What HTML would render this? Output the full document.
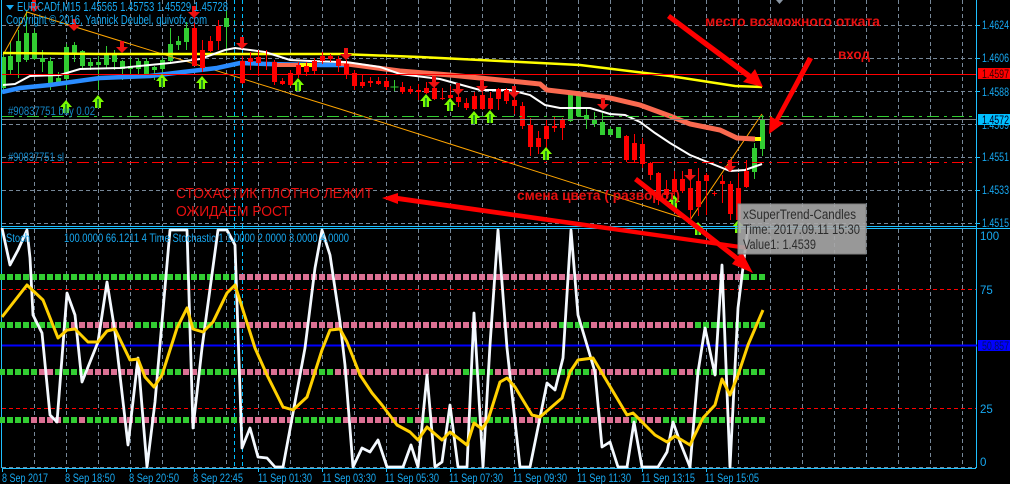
<!DOCTYPE html>
<html><head><meta charset="utf-8"><style>
html,body{margin:0;padding:0;background:#000;width:1010px;height:484px;overflow:hidden}
svg{display:block;font-family:"Liberation Sans",sans-serif}
text{font-size:11.500px;fill:#17a8f0}
.r text{fill:#e81010;font-size:15px}
.r text.b{font-size:14px;font-weight:bold}
.tt text{fill:#2c2c2c;font-size:13.500px}
</style></head><body>
<svg width="1010" height="484" viewBox="0 0 1010 484" xmlns="http://www.w3.org/2000/svg">
<defs>
<path id="d" d="M-2-12h4v6h4l-6 6-6-6h4z" fill="#ee1111"/>
<g id="u"><path d="M0 0l6 7h-3v6h-6v-6h-3z" fill="#7cfc00"/><path d="M-1 4h2v9h-2z" fill="#228b22"/></g>
</defs>
<rect width="1010" height="484" fill="#000"/>
<!-- grid -->
<g stroke="#778899" stroke-dasharray="4 3" fill="none" shape-rendering="crispEdges">
<path d="M2 25.500H976M2 58.500H976M2 91.500H976M2 124.500H976M2 157.500H976M2 190.500H976M2 223.500H976M2 467.500H976"/>
<path d="M34.500 0V226M66.500 0V226M98.500 0V226M130.500 0V226M162.500 0V226M194.500 0V226M226.500 0V226M258.500 0V226M290.500 0V226M322.500 0V226M354.500 0V226M386.500 0V226M418.500 0V226M450.500 0V226M482.500 0V226M514.500 0V226M546.500 0V226M578.500 0V226M610.500 0V226M642.500 0V226M674.500 0V226M706.500 0V226M738.500 0V226M770.500 0V226M802.500 0V226M834.500 0V226M866.500 0V226M898.500 0V226M930.500 0V226M962.500 0V226"/>
<path d="M34.500 229V468M66.500 229V468M98.500 229V468M130.500 229V468M162.500 229V468M194.500 229V468M226.500 229V468M258.500 229V468M290.500 229V468M322.500 229V468M354.500 229V468M386.500 229V468M418.500 229V468M450.500 229V468M482.500 229V468M514.500 229V468M546.500 229V468M578.500 229V468M610.500 229V468M642.500 229V468M674.500 229V468M706.500 229V468M738.500 229V468M770.500 229V468M802.500 229V468M834.500 229V468M866.500 229V468M898.500 229V468M930.500 229V468M962.500 229V468"/>
</g>
<path d="M234.500 0V468M242.500 0V468" stroke="#00bfff" stroke-dasharray="4 3" shape-rendering="crispEdges"/>
<!-- green candles -->
<g transform="translate(.5 0)" stroke="#32cd32" fill="none" shape-rendering="crispEdges">
<path d="M3 55V91M10 42V75M18 30V78M26 10V62M34 30V60M42 50V72M50 57V90M58 72V86M66 44V90M74 42V62M82 50V69M90 58V70M98 56V90M106 46V68M114 50V70M122 60V80M130 58V74M138 58V74M146 58V78M154 66V80M162 58V80M170 28V64M178 36V50M186 22V50M226 10V52M234 20V21M394 80V91M390 87H398M570 93V122M578 92V117M586 109V129M594 112V127M602 113V135M610 127V135M618 127V138M754 143V179M762 115V156"/>
<path stroke-width="5" d="M3 57V88M10 56V70M18 41V62M26 33V60M34 33V59M42 58V62M50 61V85M58 78V85M66 47V79M74 45V53M82 51V66M90 62V66M98 62V65M106 54V65M114 54V62M122 61V69M130 66V69M138 61V69M146 61V74M154 67V70M162 60V69M170 44V61M178 41V45M186 28V42M226 18V27M570 93V121M578 93V116M586 115V119M594 120V124M602 122V135M610 129V135M618 127V138M754 148V172M762 120V149"/>
</g>
<!-- thin orange -->
<polyline points="3,55 27,12 340,109 680,217 690,220 762,114" fill="none" stroke="#ffa500" stroke-width="1"/>
<!-- MAs -->
<polyline points="3,53 100,54 340,54 420,57 500,61 580,65 670,76 735,86 762,87" fill="none" stroke="#ffff00" stroke-width="2.500"/>
<polyline points="2,92 20,88 50,85 100,78 150,76 183,72 217,68 240,63 267,64 320,65 345,65" fill="none" stroke="#2a8cff" stroke-width="4.500"/>
<polyline points="300,65 316,65" fill="none" stroke="#ffff00" stroke-width="4"/>
<polyline points="277,65 298,65" fill="none" stroke="#fa6a50" stroke-width="4"/>
<polyline points="340,63 400,71 450,75 500,80 540,84 547,90 573,93 610,98 640,105 670,116 690,124 720,130 737,138 755,139" fill="none" stroke="#fa6a50" stroke-width="5"/>
<path d="M755 139H761" stroke="#ffff00" stroke-width="4"/>
<polyline points="3,85 15,84 30,76 60,75 80,69 120,68 170,63 200,59 225,50 235,48 250,50 265,52 290,60 310,61 340,62 346,62 380,67 400,74 440,79 480,90 510,90 530,95 545,105 560,108 590,108 610,114 625,115 640,122 655,133 670,143 690,155 715,165 730,171 745,170 762,164" fill="none" stroke="#fff" stroke-width="2"/>
<!-- red candles -->
<g transform="translate(.5 0)" stroke="#ff0000" fill="none" shape-rendering="crispEdges">
<path d="M194 14V66M202 40V72M210 36V52M218 20V50M242 56V84M250 52V70M258 50V76M266 50V70M274 60V85M282 78V85M290 70V86M298 62V78M306 62V76M314 58V74M322 52V64M330 54V62M338 56V72M346 60V79M354 70V90M362 75V88M370 77V87M378 77V85M386 78V90M402 82V94M410 86V94M418 84V100M426 82V94M434 80V100M442 88V100M450 86V102M458 90V107M466 98V110M474 92V110M482 92V110M490 92V110M498 88V110M506 88V104M514 90V114M522 102V129M530 118V156M538 131V154M546 120V153M554 116V132M562 118V140M626 135V162M634 134V162M642 138V168M650 162V180M658 172V205M666 180V198M674 171V205M682 171V193M690 174V219M698 168V216M706 173V215M714 191V196M722 175V203M730 181V220M738 173V225M746 160V188"/>
<path stroke-width="5" d="M194 28V66M202 50V68M210 41V51M218 26V41M242 61V83M250 58V62M258 57V63M274 62V82M282 81V84M290 73V85M298 65V74M306 66V72M314 61V71M322 56V61M330 56V59M338 59V66M346 64V74M354 73V86M362 82V86M370 81V83M378 81V84M386 81V87M402 87V92M410 89V92M418 90V92M426 88V93M434 88V99M442 98V99M450 95V98M458 97V102M466 103V108M474 96V109M482 95V109M490 98V109M498 89V99M506 90V101M514 100V106M522 106V126M530 125V147M538 138V147M546 126V139M554 126V128M562 120V128M626 136V160M634 143V160M642 144V164M650 163V175M658 173V200M666 189V195M674 179V192M682 179V191M690 188V210M698 181V207M706 175V181M714 193V194M722 181V184M730 184V214M738 188V220M746 171V187"/>
</g>
<!-- hlines -->
<g shape-rendering="crispEdges" fill="none">
<path d="M2 74.500H977" stroke="#ff0000"/>
<path d="M2 116.500H977" stroke="#32cd32" stroke-dasharray="12 5 3 5"/>
<path d="M2 119.500H977" stroke="#808080"/>
<path d="M2 162.500H977" stroke="#ff0000" stroke-dasharray="12 5 3 5"/>
</g>
<!-- red down arrows -->
<g>
<use href="#d" x="34" y="12"/><use href="#d" x="74" y="31"/><use href="#d" x="122" y="53"/><use href="#d" x="194" y="18"/><use href="#d" x="242" y="49"/><use href="#d" x="346" y="60"/><use href="#d" x="434" y="88"/><use href="#d" x="458" y="95"/><use href="#d" x="482" y="92"/><use href="#d" x="514" y="98"/><use href="#d" x="603" y="110"/><use href="#d" x="690" y="181"/><use href="#d" x="730" y="172"/>
</g>
<!-- up arrows -->
<g>
<use href="#u" x="66" y="100"/><use href="#u" x="98" y="95"/><use href="#u" x="162" y="74"/><use href="#u" x="202" y="76"/><use href="#u" x="298" y="78"/><use href="#u" x="426" y="94"/><use href="#u" x="450" y="98"/><use href="#u" x="474" y="111"/><use href="#u" x="490" y="110"/><use href="#u" x="546" y="147"/><use href="#u" x="674" y="195"/><use href="#u" x="698" y="222"/><use href="#u" x="738" y="220"/>
</g>
<!-- pane borders -->
<g shape-rendering="crispEdges" fill="none" stroke="#1ec0ff">
<path d="M1.500 0V468M976.500 0V468M2 226.500H976M2 228.500H1010M2 468.500H976"/>
<path d="M2.500 468V472M66.500 468V472M130.500 468V472M194.500 468V472M258.500 468V472M322.500 468V472M386.500 468V472M450.500 468V472M514.500 468V472M578.500 468V472M642.500 468V472M706.500 468V472"/>
<path d="M976 25.500H980M976 58.500H980M976 91.500H980M976 157.500H980M976 190.500H980M976 223.500H980"/>
</g>
<path d="M776 0h7l-3.500 4z" fill="#8a96a3"/>
<!-- stochastic levels -->
<path d="M2 289.500H976M2 408.500H976" stroke="#ff0000" stroke-dasharray="4 3" shape-rendering="crispEdges"/>
<g fill="none" stroke-width="6" stroke-dasharray="6 2" shape-rendering="crispEdges">
<g stroke="#32cd32">
<path d="M-1 277H237"/><path d="M743 277H766"/>
<path d="M-1 325H71"/><path d="M135 325H238"/><path d="M559 325H590"/><path d="M695 325H766"/>
<path d="M-1 372H39"/><path d="M55 372H87"/><path d="M151 372H183"/><path d="M199 372H238"/><path d="M319 372H335"/><path d="M463 372H495"/><path d="M543 372H590"/><path d="M663 372H678"/><path d="M695 372H766"/>
<path d="M-1 420H30"/><path d="M63 420H78"/><path d="M87 420H118"/><path d="M135 420H142"/><path d="M159 420H190"/><path d="M199 420H238"/><path d="M295 420H342"/><path d="M407 420H414"/><path d="M423 420H430"/><path d="M447 420H454"/><path d="M471 420H478"/><path d="M487 420H510"/><path d="M543 420H590"/><path d="M631 420H638"/><path d="M663 420H686"/><path d="M695 420H726"/><path d="M735 420H766"/>
</g>
<g stroke="#db7093">
<path d="M239 277H742"/>
<path d="M71 325H134"/><path d="M239 325H558"/><path d="M591 325H694"/>
<path d="M39 372H54"/><path d="M87 372H150"/><path d="M183 372H198"/><path d="M239 372H318"/><path d="M335 372H462"/><path d="M495 372H542"/><path d="M591 372H662"/><path d="M679 372H694"/>
<path d="M31 420H62"/><path d="M79 420H86"/><path d="M119 420H134"/><path d="M143 420H158"/><path d="M191 420H198"/><path d="M239 420H294"/><path d="M343 420H406"/><path d="M415 420H422"/><path d="M431 420H446"/><path d="M455 420H470"/><path d="M479 420H486"/><path d="M511 420H542"/><path d="M591 420H630"/><path d="M639 420H662"/><path d="M687 420H694"/><path d="M727 420H734"/>
</g>
</g>
<path d="M2 345.500H977" stroke="#0000ff" stroke-width="2" shape-rendering="crispEdges"/>
<!-- stoch white -->
<polyline fill="none" stroke="#f4f9ff" stroke-width="2.800" stroke-linejoin="round" points="2,228 10,265 18,250 27,230 30,258 33,315 42,333 50,415 57,422 67,293 75,315 82,382 98,342 107,282 115,332 128,445 138,358 147,467 155,402 170,230 187,230 193,428 202,348 218,230 227,230 235,245 242,448 250,428 258,457 267,458 275,467 283,467 305,348 315,268 322,230 330,255 340,322 345,365 353,467 362,448 370,452 378,440 387,467 403,467 411,445 418,467 427,375 435,467 442,462 450,405 458,467 467,467 474,313 483,467 490,345 498,230 507,348 520,467 530,467 547,383 555,390 563,358 571,230 578,315 595,372 602,447 610,442 618,467 627,467 634,422 642,467 658,467 667,452 673,422 680,442 690,467 698,372 705,328 715,375 722,265 730,467 738,308 747,235 748,228"/>
<!-- stoch yellow -->
<polyline fill="none" stroke="#ffd000" stroke-width="3" stroke-linejoin="round" points="2,317 27,285 43,300 58,338 67,330 75,329 88,342 98,342 107,331 115,329 130,360 138,359 145,377 154,387 162,375 177,328 187,308 193,329 203,332 213,322 227,293 235,285 255,348 267,375 283,407 293,410 307,397 322,350 330,330 340,329 347,342 360,375 372,393 382,405 397,425 410,432 418,440 427,427 442,440 450,432 467,445 474,423 482,429 488,420 500,382 507,378 515,387 532,415 540,417 562,398 570,372 578,360 593,358 602,373 627,415 633,413 655,435 667,442 675,436 690,445 703,418 715,405 722,379 730,395 738,375 748,345 763,310"/>
<!-- chart texts -->
<path d="M6 5h8l-4 5z" fill="#17a8f0"/>
<text x="17" y="11" textLength="211" lengthAdjust="spacingAndGlyphs" style="font-size:12.500px">EURCADf,M15  1.45565 1.45753 1.45529 1.45728</text>
<text x="6" y="24" textLength="201" lengthAdjust="spacingAndGlyphs" style="font-size:12.500px">Copyright © 2016, Yannick Deubel, quivofx.com</text>
<text x="8" y="115" textLength="87" lengthAdjust="spacingAndGlyphs" style="fill:#1587c8;font-size:12px">#90837751 buy 0.02</text>
<text x="8" y="161" textLength="56" lengthAdjust="spacingAndGlyphs" style="fill:#1587c8;font-size:12px">#90837751 sl</text>
<text x="6" y="242" textLength="24" lengthAdjust="spacingAndGlyphs">Stoch</text>
<text x="64" y="242" textLength="285" lengthAdjust="spacingAndGlyphs" style="font-size:12px">100.0000 66.1211  4 Time Stochastic 1 1.0000 2.0000 3.0000 4.0000</text>
<!-- right axis -->
<g>
<text x="982" y="29" textLength="27" lengthAdjust="spacingAndGlyphs">1.4624</text>
<text x="982" y="62" textLength="27" lengthAdjust="spacingAndGlyphs">1.4606</text>
<text x="982" y="96" textLength="27" lengthAdjust="spacingAndGlyphs">1.4588</text>
<text x="982" y="129" textLength="27" lengthAdjust="spacingAndGlyphs">1.4569</text>
<text x="982" y="161" textLength="27" lengthAdjust="spacingAndGlyphs">1.4551</text>
<text x="982" y="194" textLength="27" lengthAdjust="spacingAndGlyphs">1.4533</text>
<text x="982" y="227" textLength="27" lengthAdjust="spacingAndGlyphs">1.4515</text>
<rect x="978" y="68" width="32" height="11" fill="#ff0000"/>
<text x="982" y="78" textLength="27" lengthAdjust="spacingAndGlyphs" style="fill:#300">1.4597</text>
<rect x="978" y="114" width="32" height="11" fill="#00bfff"/>
<text x="982" y="124" textLength="27" lengthAdjust="spacingAndGlyphs" style="fill:#002">1.4572</text>
<text x="980" y="240">100</text>
<text x="980" y="294">75</text>
<text x="980" y="413">25</text>
<text x="980" y="466">0</text>
<rect x="978" y="340" width="32" height="11" fill="#0000ff"/>
<text x="982" y="350" textLength="27" lengthAdjust="spacingAndGlyphs" style="fill:#001060">50.857</text>
</g>
<!-- dates -->
<g>
<text x="2" y="482" textLength="46" lengthAdjust="spacingAndGlyphs">8 Sep 2017</text>
<text x="65" y="482" textLength="50" lengthAdjust="spacingAndGlyphs">8 Sep 18:50</text>
<text x="129" y="482" textLength="50" lengthAdjust="spacingAndGlyphs">8 Sep 20:50</text>
<text x="193" y="482" textLength="50" lengthAdjust="spacingAndGlyphs">8 Sep 22:45</text>
<text x="258" y="482" textLength="54" lengthAdjust="spacingAndGlyphs">11 Sep 01:30</text>
<text x="322" y="482" textLength="54" lengthAdjust="spacingAndGlyphs">11 Sep 03:30</text>
<text x="385" y="482" textLength="54" lengthAdjust="spacingAndGlyphs">11 Sep 05:30</text>
<text x="449" y="482" textLength="54" lengthAdjust="spacingAndGlyphs">11 Sep 07:30</text>
<text x="513" y="482" textLength="54" lengthAdjust="spacingAndGlyphs">11 Sep 09:30</text>
<text x="577" y="482" textLength="54" lengthAdjust="spacingAndGlyphs">11 Sep 11:30</text>
<text x="641" y="482" textLength="54" lengthAdjust="spacingAndGlyphs">11 Sep 13:15</text>
<text x="705" y="482" textLength="54" lengthAdjust="spacingAndGlyphs">11 Sep 15:05</text>
</g>
<!-- annotations text -->
<g class="r">
<text class="b" x="705" y="26" textLength="175" lengthAdjust="spacingAndGlyphs">место возможного отката</text>
<text class="b" x="838" y="59" textLength="32" lengthAdjust="spacingAndGlyphs">вход</text>
<text x="176" y="198" textLength="197" lengthAdjust="spacingAndGlyphs">СТОХАСТИК ПЛОТНО ЛЕЖИТ</text>
<text x="176" y="216" textLength="114" lengthAdjust="spacingAndGlyphs">ОЖИДАЕМ РОСТ</text>
<text class="b" x="517" y="200" textLength="163" lengthAdjust="spacingAndGlyphs">смена цвета ( разворот)</text>
</g>
<!-- big red arrows -->
<g fill="#ff0000" stroke="none">
<path d="M667 18L670 14L751 74L755 69L763 87L743 82L747 78Z"/>
<path d="M813 59L808 57L775 119L770 116L769 134L784 123L779 121Z"/>
<path d="M382 198L398 193L398 196L748 246L747 250L398 201L398 204Z"/>
<path d="M634 181L637 177L738 256L742 252L753 273L732 264L735 260Z"/>
</g>
<!-- tooltip -->
<g class="tt">
<rect x="738" y="204" width="128" height="50" fill="#a8a8a8" fill-opacity=".9" stroke="#808080"/>
<text x="743" y="219" textLength="113" lengthAdjust="spacingAndGlyphs">xSuperTrend-Candles</text>
<text x="743" y="234" textLength="117" lengthAdjust="spacingAndGlyphs">Time: 2017.09.11 15:30</text>
<text x="743" y="249" textLength="73" lengthAdjust="spacingAndGlyphs">Value1: 1.4539</text>
</g>
</svg>
</body></html>
